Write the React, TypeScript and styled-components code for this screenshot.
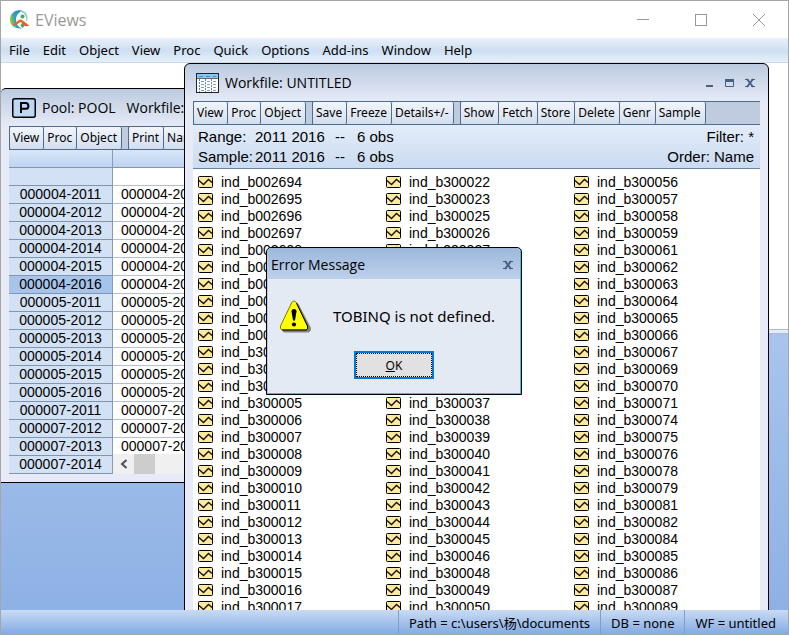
import React from "react";
import styled, { createGlobalStyle, css } from "styled-components";

const UI = '"Noto Sans", "Open Sans", sans-serif';
const TITLE = '"Open Sans", "Noto Sans", sans-serif';
const SHEET = '"Liberation Sans", Arial, sans-serif';

const GlobalStyle = createGlobalStyle`
  *, *::before, *::after { box-sizing: border-box; }
  body { margin: 0; overflow: hidden; color: #000; font-family: ${UI}; font-size: 13px; }
  button { font: inherit; color: inherit; padding: 0; border: 0; background: none; }
`;

const Frame = styled.div`
  display: flex;
  flex-direction: column;
  height: 100vh;
  border: 1px solid #a6a6a6;
  background: #fff;
`;

const TitleBar = styled.header`
  display: flex;
  align-items: center;
  gap: 5px;
  flex: 0 0 37px;
  padding: 0 3px 0 8px;
`;

const AppName = styled.h1`
  flex: 1;
  margin: 0;
  font: 400 16px/20px ${TITLE};
  color: #999;
`;

const CaptionButton = styled.button`
  display: grid;
  place-items: center;
  width: 53px;
  height: 100%;
`;

const MenuBar = styled.nav`
  display: flex;
  gap: 13px;
  flex: 0 0 25px;
  align-items: center;
  padding-left: 8px;
  border-bottom: 1px solid #c6dbf3;
  background: linear-gradient(#e9f0f9, #cddff2 52%, #e6effa);
`;

const MenuButton = styled.button`
  font: 13px/20px ${UI};
`;

const Desktop = styled.main`
  position: relative;
  flex: 1;
  display: flex;
  flex-direction: column;
  min-height: 0;
  overflow: hidden;
`;

const CommandArea = styled.div`
  flex: 0 0 266px;
  background: #fff;
`;

const Splitter = styled.div`
  flex: 0 0 5px;
  border: solid #a9bbd8;
  border-width: 1px 0;
  background: #e6ebf7;
`;

const Backdrop = styled.div`
  flex: 1;
  background: linear-gradient(#a7c5ec, #8eb1e5);
`;

const windowBase = css`
  position: absolute;
  display: flex;
  flex-direction: column;
  border: 1px solid #000;
  background: linear-gradient(#bccbe0, #e6ebf7 38px);
`;

const PoolWindow = styled.section`
  ${windowBase}
  left: 0;
  top: 25px;
  width: 320px;
  padding: 0 8px 8px;
  border-left: 0;
  border-radius: 5px 5px 0 0;
`;

const WorkfileWindow = styled.section`
  ${windowBase}
  left: 183px;
  right: 19px;
  top: 0;
  bottom: -30px;
  padding: 0 8px;
  border-radius: 6px 6px 0 0;
`;

const WindowTitle = styled.header`
  display: flex;
  align-items: center;
  gap: 6px;
  flex: 0 0 37px;
  padding: 1px 0 0 3px;
  h2 {
    flex: 1;
    margin: 0;
    font: 400 14px/20px ${TITLE};
    white-space: pre;
  }
`;

const WindowButtons = styled.div`
  display: flex;
  gap: 8px;
  padding-right: 4px;
`;

const SmallButton = styled.button`
  display: grid;
  width: 12px;
  height: 12px;
`;

const Toolbar = styled.div`
  display: flex;
  flex: 0 0 24px;
  overflow: hidden;
  border: solid #4f6b8f;
  border-width: 1px 0 1px 1px;
  background: #bfcce0;
`;

const ToolGroup = styled.div`
  display: flex;
  & + & {
    margin-left: 6px;
    border-left: 1px solid #4f6b8f;
  }
`;

const ToolButton = styled.button`
  padding: 0 4px 0 3px;
  border-right: 1px solid #4f6b8f;
  border-radius: 2px;
  background: linear-gradient(#f2f6fc, #d3deee);
  font: 12px/22px ${UI};
  white-space: nowrap;
`;

const InfoPanel = styled.div`
  display: flex;
  justify-content: space-between;
  flex: 0 0 44px;
  padding: 2px 6px 1px 5px;
  border-bottom: 1px solid #6784ab;
  background: linear-gradient(#e3ecf9, #cbdbf1);
  font: 15px/20px ${SHEET};
`;

const Facts = styled.dl`
  display: grid;
  grid-template-columns: 57px 80px 22px auto;
  margin: 0;
  white-space: nowrap;
  dt, dd { margin: 0; }
`;

const Options = styled.div`
  text-align: right;
`;

const ObjectGrid = styled.ul`
  display: grid;
  grid-template-columns: repeat(3, 188px);
  grid-template-rows: repeat(26, 17px);
  grid-auto-flow: column;
  flex: 1;
  margin: 0;
  padding: 5px 0 0 5px;
  list-style: none;
  background: #fff;
  overflow: hidden;
`;

const ObjectItem = styled.li`
  display: flex;
  align-items: center;
  gap: 8px;
  font: 14px/17px ${SHEET};
`;

const SheetWrap = styled.div`
  position: relative;
`;

const Sheet = styled.table`
  width: 100%;
  table-layout: fixed;
  border-collapse: separate;
  border-spacing: 0;
  background: #fff;
  font: 14px/17px ${SHEET};
  th, td {
    height: 18px;
    padding: 0 0 0 8px;
    border-bottom: 1px solid #b4bfce;
    font-weight: 400;
    text-align: left;
    white-space: nowrap;
  }
  th:first-child {
    width: 104px;
    padding: 0;
    border-right: 1px solid #8a9bb5;
    border-bottom-color: #8294b0;
    text-align: center;
    background: #d2e1f4;
  }
  thead th, thead th:first-child {
    background: linear-gradient(#d9e6f7, #bdd3f0);
    border-bottom-color: #8294b0;
  }
`;

const SheetRow = styled.tr<{ $selected?: boolean }>`
  && th { ${(p) => p.$selected && "background: #a6c3ea;"} }
`;

const ScrollTrack = styled.div`
  position: absolute;
  left: 104px;
  right: 0;
  bottom: 0;
  display: flex;
  height: 20px;
  background: #f0f0f0;
`;

const ScrollArrow = styled.button`
  display: grid;
  place-items: center;
  width: 21px;
`;

const ScrollThumb = styled.div`
  width: 21px;
  background: #cdcdcd;
`;

const Dialog = styled.div`
  position: absolute;
  left: 265px;
  top: 184px;
  width: 256px;
  height: 148px;
  border: 1px solid #000;
  border-radius: 5px 5px 0 0;
  background: #e4eaf3;
  box-shadow: inset -1px -1px #35c5cc, inset 1px 1px #b9cbe4;
`;

const DialogTitle = styled.header`
  display: flex;
  align-items: center;
  justify-content: space-between;
  height: 31px;
  margin: 0 1px;
  padding: 2px 6px 0 3px;
  border-radius: 4px 4px 0 0;
  background: linear-gradient(#9db7db, #bdd1eb);
  font: 14px/20px ${TITLE};
`;

const DialogBody = styled.div`
  display: flex;
  align-items: center;
  gap: 21px;
  height: 72px;
  padding: 2px 12px 0;
  font: 15px/20px ${UI};
`;

const OkButton = styled.button`
  display: block;
  width: 80px;
  height: 28px;
  margin: 0 auto;
  padding: 1px 0 0;
  border: 2px solid #0078d7;
  outline: 1px dotted #000;
  outline-offset: -3px;
  background: #e1e1e1;
  font: 12px/22px ${UI};
`;

const StatusBar = styled.footer`
  display: flex;
  justify-content: flex-end;
  flex: 0 0 24px;
  padding-right: 2px;
  background: linear-gradient(#c9dbf4, #84abe3);
  font: 13px/22px "Noto Sans", "Noto Sans CJK SC", sans-serif;
`;

const StatusCell = styled.span`
  height: 24px;
  padding: 2px 10px 0;
  border-left: 1px solid #7d9fcd;
  white-space: nowrap;
`;

const Logo = () => (
  <svg width="21" height="20" viewBox="0 0 21 20" aria-hidden="true">
    <defs>
      <linearGradient id="globe" x1="0" y1=".3" x2="1" y2="0">
        <stop offset="0" stopColor="#8cc63f" />
        <stop offset=".35" stopColor="#2f9fc0" />
        <stop offset="1" stopColor="#2a86c4" />
      </linearGradient>
    </defs>
    <path d="M12 0C5 0 1 4 1 9.500C1 15 5 19 13 18.500C9 17 7 14 7 9.500C7 6 9 2.500 13 1Z" fill="url(#globe)" />
    <path d="M11 .5C16 0 19.500 4 18.500 10L17 12C18 7 16 3 11 1.500Z" fill="#8fd0c8" />
    <circle cx="13.500" cy="6.500" r="2" fill="#4aa564" />
    <path d="M11.500 15.500L13.500 12L16 15.500L13.500 18Z" fill="#4aa564" />
    <path d="M3 14.500C6 15 8 10.500 11 9.500C13.500 9.500 15 12 20.500 15.500L17 16.500C14 15 13 12.500 11.500 12C9 13 8 16.500 3 14.500Z" fill="#e8622a" />
  </svg>
);

const PoolIcon = () => (
  <svg width="24" height="20" viewBox="0 0 24 20" aria-hidden="true">
    <rect x=".75" y=".75" width="22.500" height="18.500" rx="2" fill="#bcd8f5" stroke="#000" strokeWidth="1.500" />
    <path d="M9 15V5h4.500a2.700 2.700 0 0 1 0 5.800H9" fill="none" stroke="#000" strokeWidth="2" />
  </svg>
);

const WorkfileIcon = () => (
  <svg width="23" height="20" viewBox="0 0 23 20" shapeRendering="crispEdges" aria-hidden="true">
    <rect width="23" height="20" fill="#222" />
    <rect x="1" y="1" width="21" height="18" fill="#fff" />
    <rect x="1" y="1" width="21" height="4" fill="#85c7ee" />
    <path d="M1 5.500h21" stroke="#667" />
    <path d="M3 3.500h17" stroke="#4a8fb8" strokeDasharray="4 3" />
    <path d="M3.500 6v13M9.500 6v13M15.500 6v13" stroke="#3a8be0" strokeDasharray="2 1" />
    <path d="M5 8.500h3m3 0h3m3 0h3M5 11.500h3m3 0h3m3 0h3M5 14.500h3m3 0h3m3 0h3M5 17.500h3m3 0h3m3 0h3" stroke="#999" />
  </svg>
);

const SeriesIcon = () => (
  <svg width="15" height="13" viewBox="0 0 15 13" aria-hidden="true">
    <rect x=".5" y=".5" width="14" height="11" rx="1" fill="#fbeb9b" stroke="#000" />
    <path d="M1 4.500L5.500 8.500L10.500 3.500L14 6.500" fill="none" stroke="#1a0c00" strokeWidth="1.300" />
  </svg>
);

const CloseGlyph = () => (
  <svg width="12" height="12" viewBox="0 0 12 12" aria-hidden="true">
    <path d="M3 2L9 10M9 2L3 10" stroke="#465f85" strokeWidth="2" />
    <path d="M1 2.500h3.500M7.500 2.500H11M1 9.500h3.500M7.500 9.500H11" stroke="#465f85" />
  </svg>
);

const WarningIcon = () => (
  <svg width="33" height="33" viewBox="0 0 33 33" aria-hidden="true">
    <path d="M17 3Q19 3 20 5L31.500 27Q33 31.500 29 32.500H6Q3 32 4 30Z" fill="#808080" />
    <path d="M15 1Q16.500 1 17.500 3L28.500 26Q29.500 29.500 27 30H3.500Q.500 29.500 1.500 26L12.500 3Q13.500 1 15 1Z" fill="#ff0" stroke="#7c7c00" />
    <path d="M17.500 3L28.500 26Q29.500 29.500 27 30H3" fill="none" stroke="#000" />
    <path d="M12.500 11.500Q12.500 9 15 9T17.500 11.500L16 20.500H14Z" fill="#000" />
    <circle cx="15" cy="24.500" r="2.100" fill="#000" />
  </svg>
);

const MENUS = ["File", "Edit", "Object", "View", "Proc", "Quick", "Options", "Add-ins", "Window", "Help"];

const POOL_TOOLS = [["View", "Proc", "Object"], ["Print", "Name", "Freeze"]];

const WORKFILE_TOOLS = [
  ["View", "Proc", "Object"],
  ["Save", "Freeze", "Details+/-"],
  ["Show", "Fetch", "Store", "Delete", "Genr", "Sample"],
];

const POOL_ROWS = [
  ...["000004", "000005"].flatMap((id) => [2011, 2012, 2013, 2014, 2015, 2016].map((y) => `${id}-${y}`)),
  ...[2011, 2012, 2013, 2014].map((y) => `000007-${y}`),
];

const SERIES = (
  "002694 002695 002696 002697 002698 002699 002700 002701 002702 002703 300001 300002 300004 " +
  "300005 300006 300007 300008 300009 300010 300011 300012 300013 300014 300015 300016 300017 " +
  "300022 300023 300025 300026 300027 300028 300029 300030 300031 300032 300033 300034 300035 " +
  "300037 300038 300039 300040 300041 300042 300043 300044 300045 300046 300048 300049 300050 " +
  "300056 300057 300058 300059 300061 300062 300063 300064 300065 300066 300067 300069 300070 " +
  "300071 300074 300075 300076 300078 300079 300081 300082 300084 300085 300086 300087 300089"
).split(" ");

const Tools = ({ groups }: { groups: string[][] }) => (
  <Toolbar>
    {groups.map((group) => (
      <ToolGroup key={group[0]}>
        {group.map((label) => (
          <ToolButton key={label}>{label}</ToolButton>
        ))}
      </ToolGroup>
    ))}
  </Toolbar>
);

export default function App() {
  return (
    <Frame>
      <GlobalStyle />
      <TitleBar>
        <Logo />
        <AppName>EViews</AppName>
        <CaptionButton aria-label="Minimize">
          <svg width="12" height="12"><path d="M0 5.500h12" stroke="#999" /></svg>
        </CaptionButton>
        <CaptionButton aria-label="Maximize">
          <svg width="12" height="12"><rect x=".5" y=".5" width="11" height="11" fill="none" stroke="#999" /></svg>
        </CaptionButton>
        <CaptionButton aria-label="Close">
          <svg width="12" height="12"><path d="M0 0L12 12M12 0L0 12" stroke="#999" /></svg>
        </CaptionButton>
      </TitleBar>
      <MenuBar>
        {MENUS.map((m) => (
          <MenuButton key={m}>{m}</MenuButton>
        ))}
      </MenuBar>
      <Desktop>
        <CommandArea />
        <Splitter />
        <Backdrop />
        <PoolWindow>
          <WindowTitle>
            <PoolIcon />
            <h2>{"Pool: POOL   Workfile: UNTITLED"}</h2>
          </WindowTitle>
          <Tools groups={POOL_TOOLS} />
          <SheetWrap>
            <Sheet>
              <thead>
                <tr>
                  <th />
                  <th />
                </tr>
              </thead>
              <tbody>
                <tr>
                  <th />
                  <td />
                </tr>
                {POOL_ROWS.map((id) => (
                  <SheetRow key={id} $selected={id === "000004-2016"}>
                    <th scope="row">{id}</th>
                    <td>{id}</td>
                  </SheetRow>
                ))}
              </tbody>
            </Sheet>
            <ScrollTrack>
              <ScrollArrow aria-label="Scroll left">
                <svg width="8" height="10"><path d="M6.500 1L2 5L6.500 9" fill="none" stroke="#505050" strokeWidth="2" /></svg>
              </ScrollArrow>
              <ScrollThumb />
            </ScrollTrack>
          </SheetWrap>
        </PoolWindow>
        <WorkfileWindow>
          <WindowTitle>
            <WorkfileIcon />
            <h2>Workfile: UNTITLED</h2>
            <WindowButtons>
              <SmallButton aria-label="Minimize workfile">
                <svg width="12" height="12"><path d="M2 9h7" stroke="#465f85" strokeWidth="2" /></svg>
              </SmallButton>
              <SmallButton aria-label="Maximize workfile">
                <svg width="12" height="12">
                  <path d="M1.500 2.500h8v7h-8z" fill="none" stroke="#465f85" />
                  <path d="M1 3.500h9" stroke="#465f85" strokeWidth="3" />
                </svg>
              </SmallButton>
              <SmallButton aria-label="Close workfile">
                <CloseGlyph />
              </SmallButton>
            </WindowButtons>
          </WindowTitle>
          <Tools groups={WORKFILE_TOOLS} />
          <InfoPanel>
            <Facts>
              <dt>Range:</dt>
              <dd>2011 2016</dd>
              <dd>--</dd>
              <dd>6 obs</dd>
              <dt>Sample:</dt>
              <dd>2011 2016</dd>
              <dd>--</dd>
              <dd>6 obs</dd>
            </Facts>
            <Options>
              <div>Filter: *</div>
              <div>Order: Name</div>
            </Options>
          </InfoPanel>
          <ObjectGrid>
            {SERIES.map((code) => (
              <ObjectItem key={code}>
                <SeriesIcon />
                ind_b{code}
              </ObjectItem>
            ))}
          </ObjectGrid>
        </WorkfileWindow>
        <Dialog role="alertdialog" aria-labelledby="dialog-title">
          <DialogTitle>
            <span id="dialog-title">Error Message</span>
            <SmallButton aria-label="Close message">
              <CloseGlyph />
            </SmallButton>
          </DialogTitle>
          <DialogBody>
            <WarningIcon />
            <span>TOBINQ is not defined.</span>
          </DialogBody>
          <OkButton>
            <u>O</u>K
          </OkButton>
        </Dialog>
      </Desktop>
      <StatusBar>
        <StatusCell>Path = c:\users\杨\documents</StatusCell>
        <StatusCell>DB = none</StatusCell>
        <StatusCell>WF = untitled</StatusCell>
      </StatusBar>
    </Frame>
  );
}
